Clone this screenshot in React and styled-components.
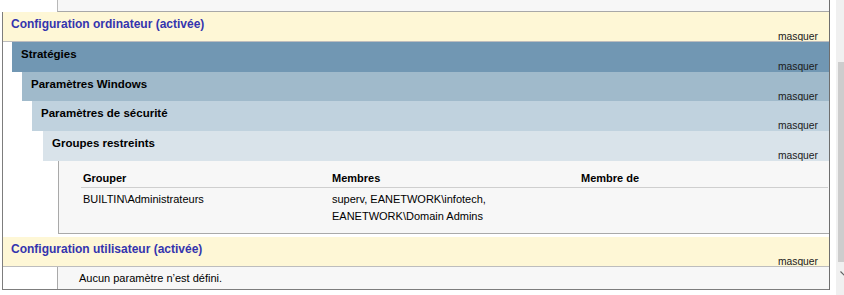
import React from 'react'
import styled, { createGlobalStyle } from 'styled-components'

const GlobalStyle = createGlobalStyle`
  html, body {
    margin: 0;
    padding: 0;
    background: #ffffff;
    overflow: hidden;
  }
  body {
    font-family: "Liberation Sans", Arial, sans-serif;
    font-size: 11px;
    color: #000000;
  }
`

const Page = styled.div`
  display: flex;
  width: 844px;
  height: 295px;
  overflow: hidden;
`

const Report = styled.div`
  width: 830px;
  height: 290px;
  flex-shrink: 0;
  box-sizing: border-box;
  border-right: 1px solid #6e6e6e;
  display: flex;
  flex-direction: column;
`

const Remnant = styled.div`
  height: 12px;
  flex-shrink: 0;
  box-sizing: border-box;
  margin-left: 57px;
  background: #f7f7f7;
  border-left: 1px solid #b8b8b8;
  border-bottom: 1px solid #a8a8a8;
`

const Body = styled.div`
  flex: 1;
  margin-left: 2px;
  border-left: 1px solid #7d7d7d;
  border-bottom: 1px solid #7d7d7d;
  display: flex;
  flex-direction: column;
`

const CategoryHeader = styled.div`
  height: 30px;
  box-sizing: border-box;
  margin-top: ${p => p.$gap || 0}px;
  padding: 5px 11px 0 8px;
  background: #fef7d6;
  border-bottom: 1px solid #bdbdbd;
  overflow: hidden;
`

const CategoryTitle = styled.div`
  font-size: 12px;
  font-weight: bold;
  line-height: 14px;
  color: #3434ae;
`

const Level = styled.div`
  margin-left: ${p => p.$indent}px;
`

const Bar = styled.div`
  height: ${p => p.$h || 30}px;
  box-sizing: border-box;
  padding: 5px 11px 0 9px;
  background: ${p => p.$bg};
  overflow: hidden;
`

const BarTitle = styled.div`
  font-size: 11.5px;
  font-weight: bold;
  line-height: 14px;
`

const Hide = styled.div`
  font-size: 10.3px;
  line-height: 12px;
  text-align: right;
  color: #1a1a1a;
`

const SettingsBox = styled.div`
  margin-left: ${p => p.$indent}px;
  background: #f7f7f7;
  border-left: 1px solid #a9a9a9;
  border-bottom: ${p => (p.$closed ? '1px solid #a9a9a9' : 'none')};
  height: ${p => p.$h}px;
  padding: ${p => p.$pad};
  box-sizing: content-box;
`

const Table = styled.div`
  display: grid;
  grid-template-columns: repeat(3, 249px);
  margin-left: 22px;
`

const HeadCell = styled.div`
  font-weight: bold;
  line-height: 17px;
  padding: 1px 2px 0;
  border-bottom: 1px solid #cfcfcf;
`

const Cell = styled.div`
  line-height: 17px;
  padding: 3px 2px 0;
`

const Note = styled.div`
  line-height: 22px;
  padding-left: 21px;
`

const Scrollbar = styled.div`
  width: 17px;
  flex-shrink: 0;
  margin-left: 6px;
  background: #f0f0f0;
  display: flex;
  flex-direction: column;
`

const Thumb = styled.div`
  margin: 62px 0 0 2px;
  width: 13px;
  height: 200px;
  background: #cdcdcd;
`

const ArrowButton = styled.div`
  height: 17px;
  display: flex;
  align-items: center;
  justify-content: center;
  margin-top: 3px;
`

const levels = [
  { title: 'Stratégies', bg: '#7197b3', indent: 9, h: 30 },
  { title: 'Paramètres Windows', bg: '#a0bacb', indent: 10, h: 29 },
  { title: 'Paramètres de sécurité', bg: '#c0d2de', indent: 10, h: 30 },
  { title: 'Groupes restreints', bg: '#d9e3ea', indent: 11, h: 30 },
]

function Nested({ depth }) {
  if (depth >= levels.length) {
    return (
      <SettingsBox $indent={15} $h={64} $pad="8px 0 0" $closed>
        <Table>
          <HeadCell>Grouper</HeadCell>
          <HeadCell>Membres</HeadCell>
          <HeadCell>Membre de</HeadCell>
          <Cell>BUILTIN\Administrateurs</Cell>
          <Cell>
            superv, EANETWORK\infotech,
            <br />
            EANETWORK\Domain Admins
          </Cell>
          <Cell />
        </Table>
      </SettingsBox>
    )
  }
  const lv = levels[depth]
  return (
    <Level $indent={lv.indent}>
      <Bar $bg={lv.bg} $h={lv.h}>
        <BarTitle>{lv.title}</BarTitle>
        <Hide>masquer</Hide>
      </Bar>
      <Nested depth={depth + 1} />
    </Level>
  )
}

export default function App() {
  return (
    <Page>
      <GlobalStyle />
      <Report>
        <Remnant />
        <Body>
          <CategoryHeader>
            <CategoryTitle>Configuration ordinateur (activée)</CategoryTitle>
            <Hide>masquer</Hide>
          </CategoryHeader>
          <Nested depth={0} />
          <CategoryHeader $gap={3}>
            <CategoryTitle>Configuration utilisateur (activée)</CategoryTitle>
            <Hide>masquer</Hide>
          </CategoryHeader>
          <SettingsBox $indent={54} $h={22} $pad="0">
            <Note>Aucun paramètre n’est défini.</Note>
          </SettingsBox>
        </Body>
      </Report>
      <Scrollbar>
        <Thumb />
        <ArrowButton>
          <svg width="9" height="6" viewBox="0 0 9 6">
            <path d="M0.5 0.5 L4.5 4.5 L8.5 0.5" fill="none" stroke="#606060" strokeWidth="1.2" />
          </svg>
        </ArrowButton>
      </Scrollbar>
    </Page>
  )
}
